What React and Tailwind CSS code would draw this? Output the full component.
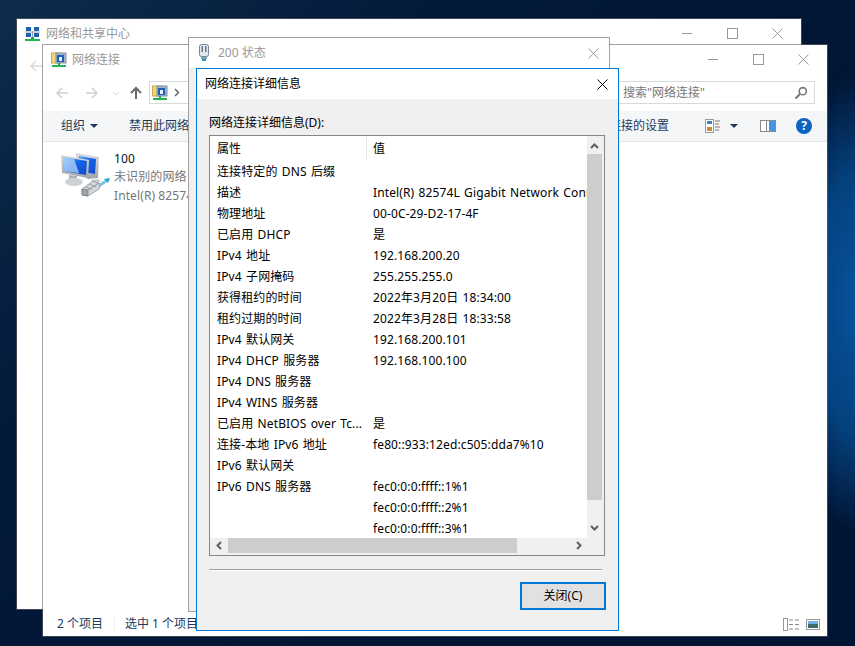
import React from 'react';

const FONT = "font-['Noto_Sans','Noto_Sans_CJK_SC',sans-serif]";

const ROWS = [
  ['连接特定的 DNS 后缀', ''],
  ['描述', 'Intel(R) 82574L Gigabit Network Connection'],
  ['物理地址', '00-0C-29-D2-17-4F'],
  ['已启用 DHCP', '是'],
  ['IPv4 地址', '192.168.200.20'],
  ['IPv4 子网掩码', '255.255.255.0'],
  ['获得租约的时间', '2022年3月20日 18:34:00'],
  ['租约过期的时间', '2022年3月28日 18:33:58'],
  ['IPv4 默认网关', '192.168.200.101'],
  ['IPv4 DHCP 服务器', '192.168.100.100'],
  ['IPv4 DNS 服务器', ''],
  ['IPv4 WINS 服务器', ''],
  ['已启用 NetBIOS over Tc...', '是'],
  ['连接-本地 IPv6 地址', 'fe80::933:12ed:c505:dda7%10'],
  ['IPv6 默认网关', ''],
  ['IPv6 DNS 服务器', 'fec0:0:0:ffff::1%1'],
  ['', 'fec0:0:0:ffff::2%1'],
  ['', 'fec0:0:0:ffff::3%1'],
];

const CloseIcon = ({ color = '#999' }) => (
  <svg width="11" height="11" viewBox="0 0 11 11" fill="none" stroke={color} strokeWidth="1">
    <path d="M0.5 0.5L10.5 10.5M10.5 0.5L0.5 10.5" />
  </svg>
);

const WinButtons = () => (
  <div className="flex items-center">
    <div className="w-[46px] pl-[4px] flex justify-center"><div className="w-[10px] h-px bg-[#999]" /></div>
    <div className="w-[46px] pl-[2px] flex justify-center"><div className="w-[11px] h-[11px] border border-[#999]" /></div>
    <div className="w-[46px] flex justify-center"><CloseIcon /></div>
  </div>
);

const NetFolderIcon = () => (
  <svg width="16" height="16" viewBox="0 0 16 16">
    <rect x="0.5" y="1" width="9" height="10" fill="#f2d675" stroke="#c9a94a" />
    <rect x="5" y="1" width="10" height="10" fill="#9fb4cc" stroke="#8a8f99" />
    <rect x="6" y="3" width="7" height="7" fill="#1b5fb8" />
    <rect x="8" y="5" width="3" height="4" fill="#e8f0fa" />
    <rect x="7" y="11" width="2" height="2" fill="#22a94f" />
    <rect x="1" y="13" width="14" height="2" fill="#22b455" />
  </svg>
);

const SharingIcon = () => (
  <svg width="16" height="16" viewBox="0 0 16 16">
    <rect x="1" y="1" width="5" height="4" fill="#1d5fb5" />
    <rect x="9" y="1" width="5" height="4" fill="#1d5fb5" />
    <rect x="1" y="7" width="5" height="4" fill="#1d5fb5" />
    <rect x="9" y="7" width="5" height="4" fill="#1d5fb5" />
    <path d="M0 6h15M7.5 5v8" stroke="#9aa0a8" strokeWidth="1" />
    <rect x="6" y="11" width="3" height="2" fill="#22a94f" />
    <rect x="0" y="13" width="15" height="2" fill="#22b455" />
  </svg>
);

const AdapterIcon = () => (
  <svg width="12" height="18" viewBox="0 0 12 18">
    <rect x="1.5" y="0.5" width="9" height="12" rx="2" fill="#e3e8ee" stroke="#73869a" />
    <rect x="3.5" y="2" width="1.5" height="6" fill="#64778b" />
    <rect x="7" y="2" width="1.5" height="6" fill="#64778b" />
    <rect x="3" y="13" width="6" height="2" fill="#7fa3bd" />
    <rect x="4" y="15" width="4" height="2" fill="#2f93c9" />
  </svg>
);

const ComputersIcon = () => (
  <svg className="shrink-0" width="60" height="52" viewBox="0 0 60 52">
    <defs>
      <linearGradient id="screen" x1="0" y1="0" x2="1" y2="1">
        <stop offset="0" stopColor="#5aa6f5" />
        <stop offset="0.5" stopColor="#0f62e6" />
        <stop offset="1" stopColor="#1a48c4" />
      </linearGradient>
      <linearGradient id="bezel" x1="0" y1="0" x2="0" y2="1">
        <stop offset="0" stopColor="#d9dde2" />
        <stop offset="1" stopColor="#9ea5ad" />
      </linearGradient>
    </defs>
    {/* back monitor */}
    <path d="M21 5l23 4-1 21-10 1-12-8z" fill="url(#bezel)" />
    <path d="M24 8l17 3-1 15-16-3z" fill="url(#screen)" />
    <path d="M36 32l8-1 1 3-6 2z" fill="#c8ccd0" />
    {/* front monitor */}
    <path d="M6 7l28 5-1 18L7 25z" fill="url(#bezel)" />
    <path d="M8 9l24 4-1 14L9 23z" fill="url(#screen)" />
    <path d="M8 9l11 2 5 14-15-2z" fill="#cfe6fb" opacity="0.65" />
    <path d="M14 27l8 1 0 4 4 2-12-1z" fill="#aeb3b8" />
    <ellipse cx="19" cy="34" rx="9" ry="4" fill="#cfd2d5" />
    {/* plug */}
    <path d="M27 41l11-8 7 3-1 5-11 7-6-1z" fill="#d4d8db" stroke="#7f878e" strokeWidth="0.7" />
    <path d="M27 41l6 1 0 6-6-1z" fill="#9da4aa" stroke="#6f7880" strokeWidth="0.7" />
    <path d="M33 42l11-7M30 38.500l7 3M34 36l7 3" stroke="#7a838a" strokeWidth="0.7" />
    <path d="M44 36l6-4 2 2-7 5z" fill="#7cc0e2" />
    <path d="M49 31l6-1-2 5z" fill="#2a9fda" />
  </svg>
);

const Chevron = ({ d }) => (
  <svg width="9" height="9" viewBox="0 0 9 9" fill="none" stroke="#606060" strokeWidth="2">
    <path d={d} />
  </svg>
);

function App() {
  return (
    <div className={`relative w-[855px] h-[646px] overflow-hidden ${FONT} text-[12px] leading-[16px] bg-[#001a3c] bg-[radial-gradient(ellipse_70px_230px_at_100%_47%,#07529c_0%,#04427f_55%,transparent_100%),linear-gradient(135deg,#0e2c4b_0%,#03193a_30%,#011635_60%,#001433_100%)]`}>
      {/* sharing center, furthest back */}
      <div className="absolute left-[16px] top-[18px] w-[786px] h-[592px] bg-white bg-clip-padding border border-[#646464]/60">
        <div className="flex items-center justify-between h-[29px] pl-[8px] pr-[1px]">
          <div className="flex items-center gap-[5px] text-[#999]">
            <SharingIcon />
            <span>网络和共享中心</span>
          </div>
          <WinButtons />
        </div>
        <svg className="ml-[13px] mt-[12px]" width="13" height="12" viewBox="0 0 13 12" fill="none" stroke="#d8d8d8" strokeWidth="1.5">
          <path d="M1 6h12M6 1L1 6l5 5" />
        </svg>
      </div>

      {/* network connections explorer */}
      <div className="absolute left-[42px] top-[44px] w-[786px] h-[593px] flex flex-col bg-white bg-clip-padding border border-[#646464]/60">
        <div className="flex items-center justify-between h-[29px] pl-[8px] pr-[1px]">
          <div className="flex items-center gap-[5px] text-[#999]">
            <NetFolderIcon />
            <span>网络连接</span>
          </div>
          <WinButtons />
        </div>
        <div className="flex items-center h-[37px] pl-[12px] pr-[12px]">
          <svg width="72" height="14" viewBox="0 0 72 14" fill="none" strokeWidth="1.5">
            <path d="M2 7h11M7 2L2 7l5 5" stroke="#d0d0d0" />
            <path d="M31 7h11M37 2l5 5-5 5" stroke="#d0d0d0" />
            <path d="M58 6l3 3 3-3" stroke="#d8d8d8" strokeWidth="1" />
          </svg>
          <svg className="ml-[2px]" width="14" height="14" viewBox="0 0 14 14" fill="none" stroke="#6a6a6a" strokeWidth="2">
            <path d="M7 13V2M2 7l5-5 5 5" />
          </svg>
          <div className="flex items-center gap-[6px] ml-[6px] w-[150px] h-[23px] pl-[2px] border border-[#d9d9d9]">
            <NetFolderIcon />
            <svg width="6" height="9" viewBox="0 0 6 9" fill="none" stroke="#666" strokeWidth="1.5"><path d="M1 1l3.5 3.5L1 8" /></svg>
          </div>
          <div className="flex items-center justify-between ml-auto w-[199px] h-[23px] pl-[6px] pr-[6px] border border-[#d9d9d9] text-[#777]">
            <span>搜索"网络连接"</span>
            <svg width="14" height="14" viewBox="0 0 14 14" fill="none" stroke="#777">
              <circle cx="8.8" cy="5.2" r="3.6" strokeWidth="1.6" />
              <path d="M6 8L1.5 12.5" strokeWidth="2.2" />
            </svg>
          </div>
        </div>
        <div className="flex items-center h-[31px] pl-[18px] bg-[#f5f6f7] border-b border-[#e5e5e5] text-[#1e395b]">
          <span>组织</span>
          <div className="ml-[5px] w-0 h-0 border-x-[4px] border-x-transparent border-t-[4px] border-t-[#1e395b]" />
          <span className="ml-[31px]">禁用此网络设备</span>
          <span className="ml-[360px]">更改此连接的设置</span>
          <svg className="ml-[36px]" width="16" height="14" viewBox="0 0 16 14" fill="none">
            <rect x="0.5" y="0.5" width="8" height="13" fill="#fff" stroke="#9a9a9a" />
            <rect x="2" y="2" width="5" height="3" fill="#3f7fc4" />
            <rect x="2" y="8" width="5" height="4" fill="#c98b3a" />
            <path d="M10 2h5M10 5h4M10 8h5M10 11h4" stroke="#777" />
          </svg>
          <div className="ml-[9px] w-0 h-0 border-x-[4px] border-x-transparent border-t-[4px] border-t-[#1e395b]" />
          <svg className="ml-[22px]" width="16" height="12" viewBox="0 0 16 12">
            <rect x="0.5" y="0.5" width="15" height="11" fill="#fff" stroke="#8a8a8a" />
            <rect x="9" y="1" width="6" height="10" fill="#3f97e6" />
            <rect x="6" y="1" width="1" height="10" fill="#8a8a8a" />
          </svg>
          <div className="ml-[20px] flex items-center justify-center w-[16px] h-[16px] rounded-full bg-[#0a64c0] text-white text-[12px] font-bold">?</div>
        </div>
        <div className="flex-1 flex pl-[12px] pt-[6px]">
          <ComputersIcon />
          <div className="ml-[-1px] pt-[2px] w-[74px] overflow-hidden whitespace-nowrap leading-[18px] tracking-[0.1px]">
            <div className="text-[#111]">100</div>
            <div className="text-[#777]">未识别的网络</div>
            <div className="mt-[1px] text-[#777]">Intel(R) 82574L Gigabit Network Connection</div>
          </div>
        </div>
        <div className="flex items-center justify-between h-[25px] pt-[1px] pl-[14px] pr-[7px] text-[#1e395b]">
          <div className="flex items-center">
            <span>2 个项目</span>
            <div className="w-px h-[12px] ml-[11px] mr-[10px] bg-[#eee]" />
            <span>选中 1 个项目</span>
          </div>
          <div className="flex items-center gap-[7px]">
            <svg width="16" height="13" viewBox="0 0 16 13" fill="none">
              <rect x="0.5" y="0.5" width="4" height="12" stroke="#999" />
              <path d="M6 2h4M12 2h4M6 6.5h4M12 6.5h4M6 11h4M12 11h4" stroke="#888" />
            </svg>
            <svg width="14" height="11" viewBox="0 0 14 11">
              <rect x="0.5" y="0.5" width="13" height="10" fill="#fff" stroke="#999" />
              <rect x="2" y="2" width="10" height="3" fill="#6fb0e8" />
              <rect x="2" y="5" width="10" height="4" fill="#3f6c66" />
            </svg>
          </div>
        </div>
      </div>

      {/* status window behind the dialog */}
      <div className="absolute left-[188px] top-[37px] w-[422px] h-[575px] bg-[#f0f0f0] bg-clip-padding border border-[#646464]/60">
        <div className="flex items-center justify-between h-[30px] pl-[9px] pr-[10px] bg-white">
          <div className="flex items-center gap-[8px] text-[#999]">
            <AdapterIcon />
            <span>200 状态</span>
          </div>
          <CloseIcon />
        </div>
      </div>

      {/* details dialog */}
      <div className="absolute left-[196px] top-[68px] w-[423px] h-[563px] flex flex-col bg-[#f0f0f0] border border-[#0078d7]">
        <div className="flex items-center justify-between h-[30px] pl-[8px] pr-[10px] bg-white text-black">
          <span>网络连接详细信息</span>
          <CloseIcon color="#000" />
        </div>
        <div className="flex-1 flex flex-col pl-[12px] pr-[12px]">
          <div className="h-[36px] pt-[16px] text-black">网络连接详细信息(D):</div>
          <div className="flex flex-col w-[396px] h-[421px] bg-[#f0f0f0] border border-[#828790]">
            <div className="flex-1 flex min-h-0">
              <div className="flex-1 min-w-0 bg-white text-black overflow-hidden tracking-[0.12px] [word-spacing:1px]">
                <div className="flex h-[25px]">
                  <div className="w-[157px] h-[24px] pl-[7px] pt-[5px] border-r border-[#e5e5e5]">属性</div>
                  <div className="pl-[6px] pt-[5px]">值</div>
                </div>
                {ROWS.map(([name, value], i) => (
                  <div key={i} className="flex items-center h-[21px] whitespace-nowrap">
                    <div className="w-[163px] shrink-0 pl-[7px]">{name}</div>
                    <div className="overflow-hidden">{value}</div>
                  </div>
                ))}
              </div>
              <div className="flex flex-col w-[17px]">
                <div className="flex items-center justify-center w-[15px] h-[18px] pt-[3px]">
                  <Chevron d="M1 6l3.5-3.5L8 6" />
                </div>
                <div className="w-[15px] h-[346px] bg-[#cdcdcd]" />
                <div className="flex-1 w-[15px]" />
                <div className="flex items-center justify-center w-[15px] h-[18px] pb-[3px]">
                  <Chevron d="M1 3l3.5 3.5L8 3" />
                </div>
              </div>
            </div>
            <div className="flex h-[17px] pr-[17px]">
              <div className="flex items-center justify-center w-[18px] h-[15px]">
                <Chevron d="M6 1L2.5 4.5 6 8" />
              </div>
              <div className="w-[289px] h-[15px] bg-[#cdcdcd]" />
              <div className="flex-1" />
              <div className="flex items-center justify-center w-[18px] h-[15px]">
                <Chevron d="M3 1l3.5 3.5L3 8" />
              </div>
            </div>
          </div>
          <div className="mt-[13px] w-[393px] h-[2px] border-t border-[#a0a0a0] bg-white" />
          <div className="flex justify-end w-[397px] mt-[11px]">
            <button className="w-[86px] h-[28px] bg-[#e1e1e1] border-2 border-[#0078d7] text-black text-[12px]">关闭(C)</button>
          </div>
        </div>
      </div>
    </div>
  );
}

export default App;
